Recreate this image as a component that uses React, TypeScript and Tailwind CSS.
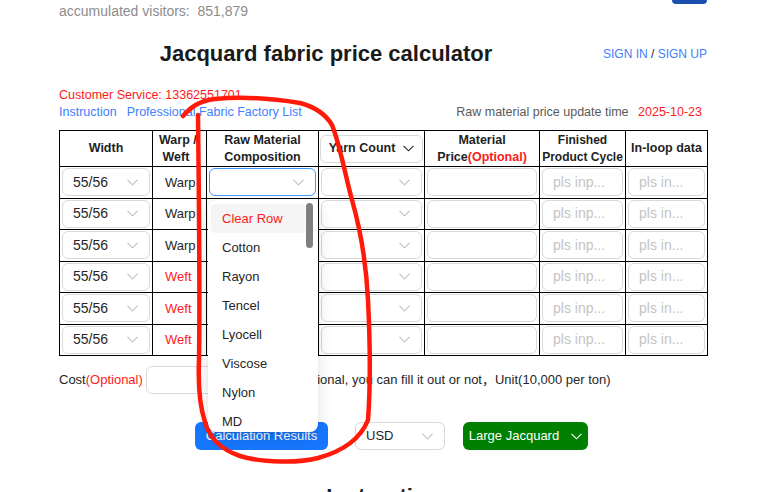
import React from 'react'

const font = { fontFamily: '"Liberation Sans", "Noto Sans CJK SC", sans-serif' }

const Chevron = ({ className = 'text-[#bfbfbf]' }: { className?: string }) => (
    <svg width="11" height="7" viewBox="0 0 11 7" className={className} fill="none">
        <path d="M0.5 0.8 L5.5 5.8 L10.5 0.8" stroke="currentColor" strokeWidth="1.1" />
    </svg>
)

const SelectBox = ({ value = '', focused = false }: { value?: string, focused?: boolean }) => (
    <div className={`flex h-[28px] items-center justify-between rounded-md border bg-white pl-[10px] pr-[11px] ${focused ? 'border-[#4096ff]' : 'border-[#d9d9d9]'}`}>
        <span className="text-[14px] text-[#262626]">{value}</span>
        <Chevron />
    </div>
)

const InputBox = ({ placeholder = '' }: { placeholder?: string }) => (
    <div className="flex h-[28px] items-center overflow-hidden whitespace-nowrap rounded-md border border-[#d9d9d9] bg-white pl-[10px] text-[14px] text-[#c4c4c4]">
        {placeholder}
    </div>
)

const rows = ['Warp', 'Warp', 'Warp', 'Weft', 'Weft', 'Weft']
const materials = ['Cotton', 'Rayon', 'Tencel', 'Lyocell', 'Viscose', 'Nylon', 'MD']

const App = () => {
    return (
        <div className="relative h-[492px] w-[769px] overflow-hidden bg-white text-[#1f1f1f]" style={font}>
            <div className="ml-[59px] w-[648px]">
                <div className="flex items-start justify-between">
                    <p className="mt-[1px] text-[14px] leading-[20px] text-[#8c8c8c]">accumulated visitors:&nbsp; 851,879</p>
                    <div className="h-[4px] w-[35px] rounded-b-md bg-[#1a4fae]" />
                </div>

                <div className="mt-[16px] flex items-center">
                    <h1 className="flex-1 text-center text-[22px] font-bold leading-[34px] text-[#1a1a1a]">Jacquard fabric price calculator</h1>
                    <div className="ml-[10px] text-[12px] text-[#4080ff]">SIGN IN <span className="text-[#1f1f1f]">/</span> SIGN UP</div>
                </div>

                <p className="mt-[16px] text-[12.5px] leading-[17px] text-[#ff1a1a]">Customer Service: 13362551701</p>
                <div className="flex items-center justify-between text-[12.5px] leading-[17px]">
                    <div className="flex gap-[10px] text-[#4080ff]">
                        <span>Instruction</span>
                        <span>Professional Fabric Factory List</span>
                    </div>
                    <div className="pr-[5px] text-[#595959]">
                        Raw material price update time <span className="ml-[6px] text-[#ff1a1a]">2025-10-23</span>
                    </div>
                </div>

                <div className="relative mt-[9px]">
                    <table className="w-[648px] table-fixed border-collapse border border-black">
                        <colgroup>
                            <col className="w-[93px]" />
                            <col className="w-[54px]" />
                            <col className="w-[112px]" />
                            <col className="w-[106px]" />
                            <col className="w-[115px]" />
                            <col className="w-[86px]" />
                            <col className="w-[82px]" />
                        </colgroup>
                        <thead>
                            <tr className="h-[36px] text-[12.5px] font-bold leading-[17px]">
                                <th className="border border-black">Width</th>
                                <th className="overflow-hidden whitespace-nowrap border border-black pl-[6px] text-left">Warp /<br />&nbsp;Weft</th>
                                <th className="border border-black">Raw Material<br />Composition</th>
                                <th className="border border-black px-[1px]">
                                    <div className="flex h-[28px] items-center justify-center gap-[8px] rounded-md border border-[#d9d9d9]">
                                        Yarn Count <Chevron className="text-[#262626]" />
                                    </div>
                                </th>
                                <th className="border border-black">Material<br />Price<span className="text-[#ff1a1a]">(Optional)</span></th>
                                <th className="whitespace-nowrap border border-black text-[12px]">Finished<br />Product Cycle</th>
                                <th className="whitespace-nowrap border border-black">In-loop data</th>
                            </tr>
                        </thead>
                        <tbody>
                            {rows.map((w, i) => (
                                <tr key={i} className="h-[31.5px]">
                                    <td className="border border-black px-[2px]"><SelectBox value="55/56" /></td>
                                    <td className={`border border-black pl-[12px] text-[13px] ${w === 'Weft' ? 'text-[#ff1a1a]' : 'text-[#262626]'}`}>{w}</td>
                                    <td className="border border-black px-[2px]"><SelectBox focused={i === 0} /></td>
                                    <td className="border border-black px-[2px]"><SelectBox /></td>
                                    <td className="border border-black px-[2px]"><InputBox /></td>
                                    <td className="border border-black px-[2px]"><InputBox placeholder="pls inp..." /></td>
                                    <td className="border border-black px-[2px]"><InputBox placeholder="pls in..." /></td>
                                </tr>
                            ))}
                        </tbody>
                    </table>

                    {/* open dropdown of first raw material select */}
                    <div className="absolute left-[149px] top-[70px] h-[232px] w-[110px] overflow-hidden rounded-lg bg-white pt-[4px] shadow-[0_6px_16px_rgba(0,0,0,0.12),0_3px_6px_-4px_rgba(0,0,0,0.16)]">
                        <div className="mx-[3px] mr-[13px] flex h-[29px] items-center rounded bg-[#f5f5f5] pl-[11px] text-[13px] text-[#ff1a1a]">Clear Row</div>
                        {materials.map(m => (
                            <div key={m} className="flex h-[29px] items-center pl-[14px] text-[13px] text-[#262626]">{m}</div>
                        ))}
                        <div className="absolute right-[5px] top-[3px] h-[45px] w-[7px] rounded-full bg-[#7f7f7f]" />
                    </div>
                </div>

                <div className="mt-[10px] flex items-center text-[13px]">
                    <span className="text-[#262626]">Cost<span className="text-[#ff1a1a]">(Optional)</span></span>
                    <div className="ml-[3px] h-[28px] w-[100px] rounded-md border border-[#d9d9d9]" />
                    <span className="ml-[10px] text-[#262626]">Cost is optional, you can fill it out or not，Unit(10,000 per ton)</span>
                </div>

                <div className="mt-[28px] flex items-center pl-[136px] text-[13px]">
                    <button className="h-[28px] w-[133px] rounded-md bg-[#1677ff] text-white">Calculation Results</button>
                    <div className="ml-[27px] flex h-[28px] w-[90px] items-center justify-between rounded-md border border-[#d9d9d9] pl-[10px] pr-[11px]">
                        <span>USD</span>
                        <Chevron />
                    </div>
                    <button className="ml-[18px] flex h-[28px] w-[125px] items-center justify-center gap-[12px] rounded-md bg-[#008000] text-white">
                        Large Jacquard <Chevron className="text-white" />
                    </button>
                </div>

                <h2 className="mt-[32px] text-center text-[22px] font-bold leading-[30px] text-[#1a1a1a]">Instruction</h2>
            </div>

            <svg className="pointer-events-none absolute left-0 top-0" width="769" height="492" viewBox="0 0 769 492" fill="none">
                <path
                    d="M183 116 C190 108 198 101 215 99 C245 96 275 99 300 103 C315 107 325 113 332 125 C340 145 344 170 352 200 C360 228 366 260 368 300 C370 340 371 380 368 420 C360 440 340 452 318 458 C300 463 262 463 240 456 C222 450 210 440 205 422 C199 404 198 385 199 360 C200 300 199 200 198 115"
                    stroke="#ff1a0a"
                    strokeWidth="4.5"
                    strokeLinecap="round"
                    strokeLinejoin="round"
                />
            </svg>
        </div>
    )
}

export default App
